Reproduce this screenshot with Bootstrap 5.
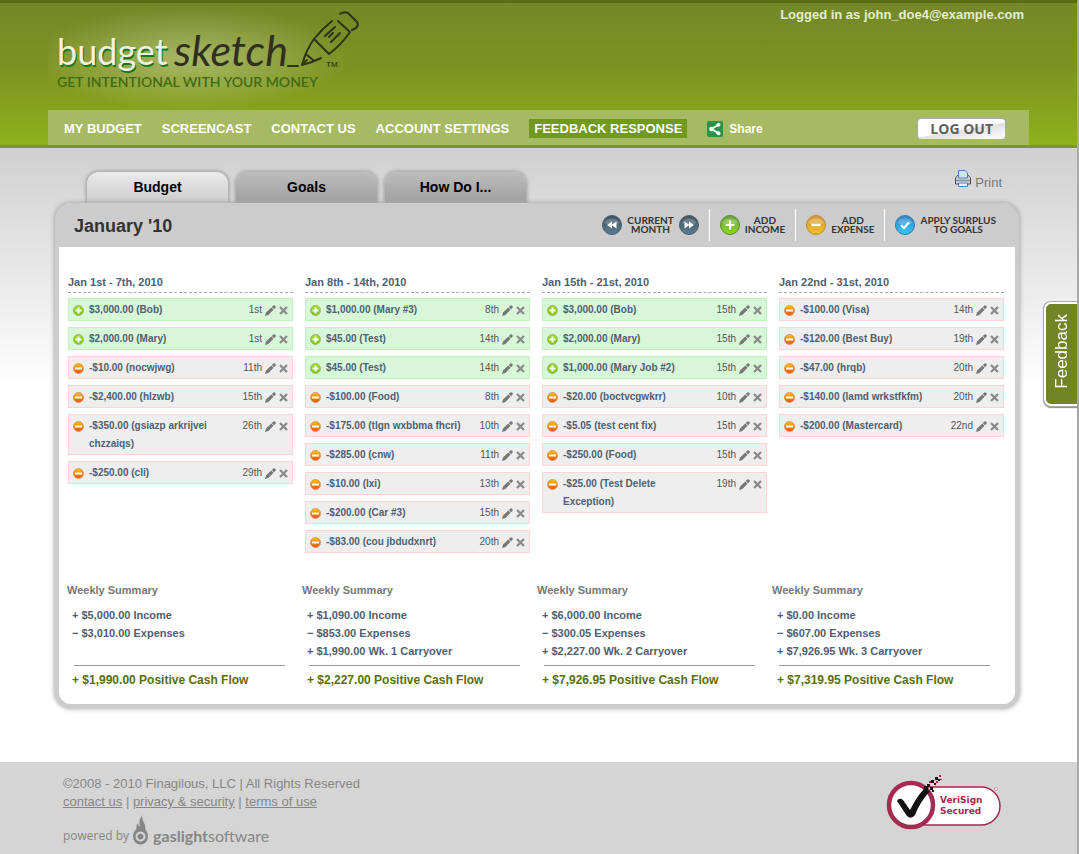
<!DOCTYPE html>
<html lang="en">
<head>
<meta charset="utf-8">
<meta name="viewport" content="width=device-width, initial-scale=1">
<title>BudgetSketch - January '10</title>
<link rel="stylesheet" href="https://cdn.jsdelivr.net/npm/bootstrap@5.3.0/dist/css/bootstrap.min.css">
<script defer src="https://cdn.jsdelivr.net/npm/bootstrap@5.3.0/dist/js/bootstrap.bundle.min.js"></script>
<style>
body{font-family:"Liberation Sans",Arial,sans-serif;font-size:13px;line-height:18px;color:#777;background:#fff;border-right:2px solid #a9a9a9}
button{font-family:inherit}
.wrap{width:100%;max-width:981px;margin-inline:auto}
.site-head{background:linear-gradient(#758729,#7d9222 45%,#8eb11b);border-top:3px solid #5b6d14;border-bottom:3px solid #7f9423}
.brand-row{height:107px;padding-right:5px}
.brand-link{background:radial-gradient(ellipse 48% 48% at 43% 52%,#d5dfac80,#dfe8b400);width:330px;height:107px}
.who{font-weight:700;color:#e6edcf;padding-top:3px}
.main-nav{background:#a6b963;min-height:35px;padding:2px 23px 0 16px;gap:20px}
.main-nav a{color:#fff;font-weight:700;text-decoration:none}
.main-nav a.hot{background:#70991d;padding:0 5px;line-height:19px}
.main-nav a.share{font-size:12px;gap:6px}
.logout{font-family:"Open Sans",sans-serif;font-weight:700;font-size:14px;line-height:18px;color:#5f5f5f;border:1px solid #aaa;border-radius:4px;padding:1px 12px;background:linear-gradient(170deg,#fff 52%,#e0e0e0 54%,#fff)}
.stage{background:linear-gradient(#d0d0d0,#fff) top/100% 240px no-repeat;padding-bottom:54px}
.tabs-row{padding:0 27px 0 39px;height:55px}
.tab-strip{gap:8px}
.tab-strip button{width:141px;height:31px;border:0;border-radius:12px 12px 0 0;background:linear-gradient(#bdbdbd,#9f9f9f);font-weight:700;font-size:14px;line-height:28px;color:#000;padding:0 0 2px;box-shadow:0 0 3px 2px #b0b0b0}
.tab-strip button.on{background:linear-gradient(#ebebeb,#ccc)}
.print{color:#777;text-decoration:none;gap:4px;padding-bottom:11px}
.sheet{margin:0 10px 0 7px;border:4px solid #ccc;border-top:0;border-radius:16px;background:#fff;box-shadow:0 0 4px 1px #aaa;position:relative}
.sheet-head{background:#ccc;border-radius:12px 12px 0 0;min-height:44px;padding:0 9px 0 15px}
.sheet-head h1{font-size:18px;line-height:22px;font-weight:700;color:#333;margin:2px 0 0}
.tool{border:0;background:none;padding:0;display:flex;align-items:center;gap:5px;font:700 10px/9px Lato,sans-serif;color:#333;text-align:center}
.tool-group{display:flex;align-items:center;gap:5px;padding:0 10px;min-height:32px}
.tool-group + .tool-group{border-left:1px solid #fff}
.weeks{padding:26px 11px 0 9px;min-height:334px}
.weeks .row{--bs-gutter-x:12px}
.weeks h2{font-size:11px;line-height:18px;font-weight:700;color:#4f6072;margin:0 0 5px;border-bottom:1px dashed #aaa;padding-bottom:1px}
.entry{display:flex;align-items:flex-start;border:1px solid #fdd3d3;background:#eee;padding:1px 4px 2px;margin-bottom:6px;font-size:10px;line-height:18px;color:#555}
.entry.inc{border-color:#bff0c0;background:#d8f7d9}
.entry b{flex:1;color:#4f6072;padding:1px 8px 0 5px;margin-bottom:-1px}
.entry span{white-space:nowrap;padding:1px 3px 0 0;margin-bottom:-1px}
.entry svg{flex:none;margin-top:5px;display:block}
.entry button{border:0;background:none;padding:0;color:#777}
.entry button + button{margin-left:3px}
.sums{padding:0 8px;font-weight:700}
.sums h3{font-size:11px;line-height:18px;font-weight:700;color:#777;margin:0 0 7px}
.sums ul{font-size:11px;line-height:18px;color:#4f6072;padding:0 0 0 5px;margin:0;min-height:59px;list-style:none}
.sums hr{margin:0 17px 0 7px;border-color:#999;opacity:1}
.sums p{font-size:12px;line-height:18px;color:#586f10;margin:5px 0 15px;padding-left:5px}
.site-foot{padding:13px 27px 8px 15px}
.foot-band{background:#d5d5d5;color:#868686}
.foot-band a{color:#868686}
.powered{font:12px/18px "Open Sans",sans-serif;gap:4px}
.gas{font-family:Lato,sans-serif;font-size:16px}
.feedback{position:fixed;right:2px;top:302px;height:104px;width:33px;border:2px solid #fff;border-right:0;border-radius:7px 0 0 7px;background:#728426;color:#fff;box-shadow:0 0 0 1px #aaa,0 1px 1px 1px #888;padding:0}
.feedback span{writing-mode:vertical-rl;transform:rotate(180deg);font-size:17px;line-height:22px;font-weight:400}
</style>
</head>
<body class="min-vh-100 d-flex flex-column">
<svg width="0" height="0" class="position-absolute" aria-hidden="true">
<defs>
<linearGradient id="gGreen" x2="0" y2="1"><stop stop-color="#6da33e"/><stop offset="1" stop-color="#8fd61f"/></linearGradient>
<linearGradient id="gGold" x2="0" y2="1"><stop stop-color="#d69a3e"/><stop offset="1" stop-color="#efbf25"/></linearGradient>
<linearGradient id="gBlue" x2="0" y2="1"><stop stop-color="#2f86cb"/><stop offset="1" stop-color="#35c7f3"/></linearGradient>
<linearGradient id="gSlate" x2="0" y2="1"><stop stop-color="#42505c"/><stop offset="1" stop-color="#587f93"/></linearGradient>
<linearGradient id="gLime" x2="0" y2="1"><stop stop-color="#9be01c"/><stop offset="1" stop-color="#79c400"/></linearGradient>
<linearGradient id="gOrange" x2="0" y2="1"><stop stop-color="#ffc400"/><stop offset="1" stop-color="#f04a10"/></linearGradient>
</defs>
<symbol id="plus" viewBox="0 0 11 11"><circle cx="5.5" cy="5.5" r="5" fill="url(#gLime)" stroke="#a3b87a"/><path d="M5.5 2.5v6M2.5 5.5h6" stroke="#fff" stroke-width="2"/></symbol>
<symbol id="minus" viewBox="0 0 11 11"><circle cx="5.5" cy="5.5" r="5" fill="url(#gOrange)" stroke="#dd9a68"/><path d="M2 5.5h7" stroke="#fff" stroke-width="2"/></symbol>
<symbol id="pen" viewBox="0 0 11 11"><path d="M0 11l1-3.400L6.300 2.500l2.200 2.200L3.400 9.900zM6.800 2L8.400.5Q9.200-.2 10.200.700T10.500 2.700L9 4.200z" fill="currentColor"/></symbol>
<symbol id="cross" viewBox="0 0 9 9"><path d="M1 1l7 7M8 1L1 8" stroke="#8a8a8a" stroke-width="2.300"/></symbol>
</svg>

<header class="site-head">
 <div class="wrap">
  <div class="brand-row d-flex justify-content-between align-items-start">
   <a class="brand-link d-block" href="#" aria-label="budgetsketch home">
    <svg width="330" height="107" viewBox="48 3 330 107">
     <g font-family="Lato" font-size="36">
      <text x="58" y="67" fill="#127a16">budget</text>
      <text x="57" y="65" fill="#eef0e4">budget</text>
     </g>
     <text x="174" y="66" font-family="Lato" font-style="italic" font-size="43" fill="#303020">sketch</text>
     <g fill="none" stroke="#2f3318" stroke-width="2" stroke-linecap="round" stroke-linejoin="round">
      <path d="M288 66l10 0M314 39Q306 50 302 65M302 65Q311 63 321 58M307 55l6 5M302 64l5-4"/>
      <path d="M332 21Q322 29 314 39L329 54Q341 45 350 32L338 21M335 27l-10 9M333 33l-4 4M340 33l-9 9"/>
      <path d="M340 14Q344 11 348 13L357 22Q359 25 356 28L352 30"/>
     </g>
     <text x="326" y="67" font-family="Liberation Sans" font-size="8" fill="#20240c">TM</text>
     <text x="57" y="87" font-family="Lato" font-weight="600" font-size="14" fill="#3f6a17">GET INTENTIONAL WITH YOUR MONEY</text>
    </svg>
   </a>
   <div class="who">Logged in as john_doe4@example.com</div>
  </div>
  <nav class="main-nav d-flex align-items-center" aria-label="Main">
   <a href="#">MY BUDGET</a><a href="#">SCREENCAST</a><a href="#">CONTACT US</a><a href="#">ACCOUNT SETTINGS</a>
   <a class="hot" href="#">FEEDBACK RESPONSE</a>
   <a class="share d-flex align-items-center" href="#"><svg width="16" height="16" viewBox="0 0 16 16"><rect width="16" height="16" rx="2" fill="#279447"/><path d="M11.500 3.700L4.500 8l7 4.300" fill="none" stroke="#fff" stroke-width="1.800"/><g fill="#fff"><circle cx="11.500" cy="3.700" r="2"/><circle cx="4.300" cy="8" r="2.200"/><circle cx="11.500" cy="12.300" r="2"/></g></svg>Share</a>
   <button type="button" class="logout ms-auto">LOG OUT</button>
  </nav>
 </div>
</header>

<main class="stage">
 <div class="wrap">
  <div class="tabs-row d-flex justify-content-between align-items-end">
   <div class="tab-strip d-flex" role="tablist">
    <button type="button" role="tab" aria-selected="true" class="on">Budget</button>
    <button type="button" role="tab" aria-selected="false">Goals</button>
    <button type="button" role="tab" aria-selected="false">How Do I...</button>
   </div>
   <a class="print d-flex" href="#"><svg width="16" height="17" viewBox="0 0 16 17"><path d="M.5 8l2.500-3h10l2.500 3v6H.5z" fill="#d4d4d8" stroke="#4c4f5a"/><path d="M3.500 8V.5h6.500l2.500 2.500V8z" fill="#cfe5fb" stroke="#4a7fc4"/><path d="M1 10.500h14" stroke="#8a8d96" stroke-width="1.500"/><path d="M3.500 13h9v3.500h-9z" fill="#eaf3ff" stroke="#4a7fc4"/></svg><span class="pt-1">Print</span></a>
  </div>

  <section class="sheet">
   <div class="sheet-head d-flex justify-content-between align-items-center">
    <h1>January '10</h1>
    <div class="d-flex">
     <div class="tool-group">
      <button type="button" class="tool" aria-label="Previous month"><svg width="20" height="20" viewBox="0 0 20 20"><circle cx="10" cy="10" r="9.500" fill="url(#gSlate)" stroke="#4c5d69"/><path d="M2.500 8a8 7 0 0 1 15 0Q10 11 2.500 8" fill="#fff" opacity=".22"/><path d="M10 6.500v7L5 10zM14.500 6.500v7l-5-3.500z" fill="#fff"/></svg></button>
      <button type="button" class="tool">CURRENT<br>MONTH</button>
      <button type="button" class="tool" aria-label="Next month"><svg width="20" height="20" viewBox="0 0 20 20"><circle cx="10" cy="10" r="9.500" fill="url(#gSlate)" stroke="#4c5d69"/><path d="M2.500 8a8 7 0 0 1 15 0Q10 11 2.500 8" fill="#fff" opacity=".22"/><path d="M10 6.500v7l5-3.500zM5.500 6.500v7l5-3.500z" fill="#fff"/></svg></button>
     </div>
     <div class="tool-group"><button type="button" class="tool"><svg width="20" height="20" viewBox="0 0 20 20"><circle cx="10" cy="10" r="9.500" fill="url(#gGreen)" stroke="#4e8a35"/><path d="M2.500 8a8 7 0 0 1 15 0Q10 11 2.500 8" fill="#fff" opacity=".22"/><path d="M10 5.500v9M5.500 10h9" stroke="#fff" stroke-width="2.200"/></svg><span>ADD<br>INCOME</span></button></div>
     <div class="tool-group"><button type="button" class="tool"><svg width="20" height="20" viewBox="0 0 20 20"><circle cx="10" cy="10" r="9.500" fill="url(#gGold)" stroke="#b98a3c"/><path d="M2.500 8a8 7 0 0 1 15 0Q10 11 2.500 8" fill="#fff" opacity=".22"/><path d="M5.500 10h9" stroke="#fff" stroke-width="2.400"/></svg><span>ADD<br>EXPENSE</span></button></div>
     <div class="tool-group"><button type="button" class="tool"><svg width="20" height="20" viewBox="0 0 20 20"><circle cx="10" cy="10" r="9.500" fill="url(#gBlue)" stroke="#3576a8"/><path d="M2.500 8a8 7 0 0 1 15 0Q10 11 2.500 8" fill="#fff" opacity=".22"/><path d="M6 10l3 3 5-5.500" fill="none" stroke="#fff" stroke-width="2.400"/></svg><span>APPLY SURPLUS<br>TO GOALS</span></button></div>
    </div>
   </div>

   <div class="weeks">
    <div class="row row-cols-4">
     <div class="col">
      <h2>Jan 1st - 7th, 2010</h2>
      <div class="entry inc"><svg width="11" height="11"><use href="#plus"/></svg><b>$3,000.00 (Bob)</b><span>1st</span><button type="button" aria-label="Edit"><svg width="11" height="11"><use href="#pen"/></svg></button><button type="button" aria-label="Delete"><svg width="9" height="11"><use href="#cross"/></svg></button></div>
      <div class="entry inc"><svg width="11" height="11"><use href="#plus"/></svg><b>$2,000.00 (Mary)</b><span>1st</span><button type="button" aria-label="Edit"><svg width="11" height="11"><use href="#pen"/></svg></button><button type="button" aria-label="Delete"><svg width="9" height="11"><use href="#cross"/></svg></button></div>
      <div class="entry"><svg width="11" height="11"><use href="#minus"/></svg><b>-$10.00 (nocwjwg)</b><span>11th</span><button type="button" aria-label="Edit"><svg width="11" height="11"><use href="#pen"/></svg></button><button type="button" aria-label="Delete"><svg width="9" height="11"><use href="#cross"/></svg></button></div>
      <div class="entry"><svg width="11" height="11"><use href="#minus"/></svg><b>-$2,400.00 (hlzwb)</b><span>15th</span><button type="button" aria-label="Edit"><svg width="11" height="11"><use href="#pen"/></svg></button><button type="button" aria-label="Delete"><svg width="9" height="11"><use href="#cross"/></svg></button></div>
      <div class="entry"><svg width="11" height="11"><use href="#minus"/></svg><b>-$350.00 (gsiazp arkrijvei chzzaiqs)</b><span>26th</span><button type="button" aria-label="Edit"><svg width="11" height="11"><use href="#pen"/></svg></button><button type="button" aria-label="Delete"><svg width="9" height="11"><use href="#cross"/></svg></button></div>
      <div class="entry"><svg width="11" height="11"><use href="#minus"/></svg><b>-$250.00 (cli)</b><span>29th</span><button type="button" aria-label="Edit"><svg width="11" height="11"><use href="#pen"/></svg></button><button type="button" aria-label="Delete"><svg width="9" height="11"><use href="#cross"/></svg></button></div>
     </div>
     <div class="col">
      <h2>Jan 8th - 14th, 2010</h2>
      <div class="entry inc"><svg width="11" height="11"><use href="#plus"/></svg><b>$1,000.00 (Mary #3)</b><span>8th</span><button type="button" aria-label="Edit"><svg width="11" height="11"><use href="#pen"/></svg></button><button type="button" aria-label="Delete"><svg width="9" height="11"><use href="#cross"/></svg></button></div>
      <div class="entry inc"><svg width="11" height="11"><use href="#plus"/></svg><b>$45.00 (Test)</b><span>14th</span><button type="button" aria-label="Edit"><svg width="11" height="11"><use href="#pen"/></svg></button><button type="button" aria-label="Delete"><svg width="9" height="11"><use href="#cross"/></svg></button></div>
      <div class="entry inc"><svg width="11" height="11"><use href="#plus"/></svg><b>$45.00 (Test)</b><span>14th</span><button type="button" aria-label="Edit"><svg width="11" height="11"><use href="#pen"/></svg></button><button type="button" aria-label="Delete"><svg width="9" height="11"><use href="#cross"/></svg></button></div>
      <div class="entry"><svg width="11" height="11"><use href="#minus"/></svg><b>-$100.00 (Food)</b><span>8th</span><button type="button" aria-label="Edit"><svg width="11" height="11"><use href="#pen"/></svg></button><button type="button" aria-label="Delete"><svg width="9" height="11"><use href="#cross"/></svg></button></div>
      <div class="entry"><svg width="11" height="11"><use href="#minus"/></svg><b>-$175.00 (tlgn wxbbma fhcri)</b><span>10th</span><button type="button" aria-label="Edit"><svg width="11" height="11"><use href="#pen"/></svg></button><button type="button" aria-label="Delete"><svg width="9" height="11"><use href="#cross"/></svg></button></div>
      <div class="entry"><svg width="11" height="11"><use href="#minus"/></svg><b>-$285.00 (cnw)</b><span>11th</span><button type="button" aria-label="Edit"><svg width="11" height="11"><use href="#pen"/></svg></button><button type="button" aria-label="Delete"><svg width="9" height="11"><use href="#cross"/></svg></button></div>
      <div class="entry"><svg width="11" height="11"><use href="#minus"/></svg><b>-$10.00 (lxi)</b><span>13th</span><button type="button" aria-label="Edit"><svg width="11" height="11"><use href="#pen"/></svg></button><button type="button" aria-label="Delete"><svg width="9" height="11"><use href="#cross"/></svg></button></div>
      <div class="entry"><svg width="11" height="11"><use href="#minus"/></svg><b>-$200.00 (Car #3)</b><span>15th</span><button type="button" aria-label="Edit"><svg width="11" height="11"><use href="#pen"/></svg></button><button type="button" aria-label="Delete"><svg width="9" height="11"><use href="#cross"/></svg></button></div>
      <div class="entry"><svg width="11" height="11"><use href="#minus"/></svg><b>-$83.00 (cou jbdudxnrt)</b><span>20th</span><button type="button" aria-label="Edit"><svg width="11" height="11"><use href="#pen"/></svg></button><button type="button" aria-label="Delete"><svg width="9" height="11"><use href="#cross"/></svg></button></div>
     </div>
     <div class="col">
      <h2>Jan 15th - 21st, 2010</h2>
      <div class="entry inc"><svg width="11" height="11"><use href="#plus"/></svg><b>$3,000.00 (Bob)</b><span>15th</span><button type="button" aria-label="Edit"><svg width="11" height="11"><use href="#pen"/></svg></button><button type="button" aria-label="Delete"><svg width="9" height="11"><use href="#cross"/></svg></button></div>
      <div class="entry inc"><svg width="11" height="11"><use href="#plus"/></svg><b>$2,000.00 (Mary)</b><span>15th</span><button type="button" aria-label="Edit"><svg width="11" height="11"><use href="#pen"/></svg></button><button type="button" aria-label="Delete"><svg width="9" height="11"><use href="#cross"/></svg></button></div>
      <div class="entry inc"><svg width="11" height="11"><use href="#plus"/></svg><b>$1,000.00 (Mary Job #2)</b><span>15th</span><button type="button" aria-label="Edit"><svg width="11" height="11"><use href="#pen"/></svg></button><button type="button" aria-label="Delete"><svg width="9" height="11"><use href="#cross"/></svg></button></div>
      <div class="entry"><svg width="11" height="11"><use href="#minus"/></svg><b>-$20.00 (boctvcgwkrr)</b><span>10th</span><button type="button" aria-label="Edit"><svg width="11" height="11"><use href="#pen"/></svg></button><button type="button" aria-label="Delete"><svg width="9" height="11"><use href="#cross"/></svg></button></div>
      <div class="entry"><svg width="11" height="11"><use href="#minus"/></svg><b>-$5.05 (test cent fix)</b><span>15th</span><button type="button" aria-label="Edit"><svg width="11" height="11"><use href="#pen"/></svg></button><button type="button" aria-label="Delete"><svg width="9" height="11"><use href="#cross"/></svg></button></div>
      <div class="entry"><svg width="11" height="11"><use href="#minus"/></svg><b>-$250.00 (Food)</b><span>15th</span><button type="button" aria-label="Edit"><svg width="11" height="11"><use href="#pen"/></svg></button><button type="button" aria-label="Delete"><svg width="9" height="11"><use href="#cross"/></svg></button></div>
      <div class="entry"><svg width="11" height="11"><use href="#minus"/></svg><b>-$25.00 (Test Delete Exception)</b><span>19th</span><button type="button" aria-label="Edit"><svg width="11" height="11"><use href="#pen"/></svg></button><button type="button" aria-label="Delete"><svg width="9" height="11"><use href="#cross"/></svg></button></div>
     </div>
     <div class="col">
      <h2>Jan 22nd - 31st, 2010</h2>
      <div class="entry"><svg width="11" height="11"><use href="#minus"/></svg><b>-$100.00 (Visa)</b><span>14th</span><button type="button" aria-label="Edit"><svg width="11" height="11"><use href="#pen"/></svg></button><button type="button" aria-label="Delete"><svg width="9" height="11"><use href="#cross"/></svg></button></div>
      <div class="entry"><svg width="11" height="11"><use href="#minus"/></svg><b>-$120.00 (Best Buy)</b><span>19th</span><button type="button" aria-label="Edit"><svg width="11" height="11"><use href="#pen"/></svg></button><button type="button" aria-label="Delete"><svg width="9" height="11"><use href="#cross"/></svg></button></div>
      <div class="entry"><svg width="11" height="11"><use href="#minus"/></svg><b>-$47.00 (hrqb)</b><span>20th</span><button type="button" aria-label="Edit"><svg width="11" height="11"><use href="#pen"/></svg></button><button type="button" aria-label="Delete"><svg width="9" height="11"><use href="#cross"/></svg></button></div>
      <div class="entry"><svg width="11" height="11"><use href="#minus"/></svg><b>-$140.00 (lamd wrkstfkfm)</b><span>20th</span><button type="button" aria-label="Edit"><svg width="11" height="11"><use href="#pen"/></svg></button><button type="button" aria-label="Delete"><svg width="9" height="11"><use href="#cross"/></svg></button></div>
      <div class="entry"><svg width="11" height="11"><use href="#minus"/></svg><b>-$200.00 (Mastercard)</b><span>22nd</span><button type="button" aria-label="Edit"><svg width="11" height="11"><use href="#pen"/></svg></button><button type="button" aria-label="Delete"><svg width="9" height="11"><use href="#cross"/></svg></button></div>
     </div>
    </div>
   </div>

   <div class="sums">
    <div class="row row-cols-4 gx-0">
     <div class="col"><h3>Weekly Summary</h3><ul><li>+ $5,000.00 Income</li><li>− $3,010.00 Expenses</li></ul><hr><p>+ $1,990.00 Positive Cash Flow</p></div>
     <div class="col"><h3>Weekly Summary</h3><ul><li>+ $1,090.00 Income</li><li>− $853.00 Expenses</li><li>+ $1,990.00 Wk. 1 Carryover</li></ul><hr><p>+ $2,227.00 Positive Cash Flow</p></div>
     <div class="col"><h3>Weekly Summary</h3><ul><li>+ $6,000.00 Income</li><li>− $300.05 Expenses</li><li>+ $2,227.00 Wk. 2 Carryover</li></ul><hr><p>+ $7,926.95 Positive Cash Flow</p></div>
     <div class="col"><h3>Weekly Summary</h3><ul><li>+ $0.00 Income</li><li>− $607.00 Expenses</li><li>+ $7,926.95 Wk. 3 Carryover</li></ul><hr><p>+ $7,319.95 Positive Cash Flow</p></div>
    </div>
   </div>
  </section>
 </div>
</main>

<footer class="foot-band flex-grow-1 d-flex">
 <div class="wrap site-foot d-flex justify-content-between align-items-start">
  <div>
   <div>©2008 - 2010 Finagilous, LLC | All Rights Reserved</div>
   <div><a href="#">contact us</a> | <a href="#">privacy &amp; security</a> | <a href="#">terms of use</a></div>
   <div class="powered d-flex align-items-end pt-1"><span>powered by</span>
    <svg width="16" height="30" viewBox="0 0 16 30"><path fill-rule="evenodd" d="M9.500 0Q8.500 4 11 8q2 3 1 6 3 3 3 7.500A7.500 8 0 0 1 0 21.500Q0 17 3.500 14 2.500 10 5.500 8 5 12 7 11 5 5 9.500 0M7.500 16.500a5 5 0 1 0 .01 0M7.500 18.500a3 3 0 1 1-.01 0" fill="#858585"/></svg>
    <span class="gas"><strong>gaslight</strong>software</span></div>
  </div>
  <a href="#" aria-label="VeriSign Secured"><svg class="d-block mt-n1" width="116" height="59" viewBox="0 0 116 59">
   <rect x="22" y="12" width="92" height="38" rx="19" fill="#fff" stroke="#a52a50" stroke-width="1.500"/>
   <circle cx="25" cy="30" r="22" fill="#fff" stroke="#a52a50" stroke-width="4.500"/>
   <path d="M11 26Q13 22 17 25L24 35Q31 21 38 14L44 16Q34 27 29 40Q25 45 21 41Z" fill="#111"/>
   <path d="M41 9h3v3h-3zM45 5h3v3h-3zM44 12h3v3h-3zM48 8h2v2h-2zM49 2h3v3h-3zM52 4h2v2h-2zM46 15h2v2h-2zM38 11h4v4h-4z" fill="#111"/>
   <path d="M53 0h2v2h-2zM50 6h2v2h-2zM54 4h2v1h-2zM43 6h2v2h-2z" fill="#a52a50"/>
   <text x="54" y="28" font-family="DejaVu Sans" font-size="9" font-weight="700" fill="#a52a50">VeriSign</text>
   <text x="54" y="39" font-family="DejaVu Sans" font-size="9" font-weight="700" fill="#a52a50">Secured</text>
   <circle cx="110" cy="14" r="1.500" fill="#fff" stroke="#c77" stroke-width=".7"/>
  </svg></a>
 </div>
</footer>
<button type="button" class="feedback"><span>Feedback</span></button>
</body>
</html>
